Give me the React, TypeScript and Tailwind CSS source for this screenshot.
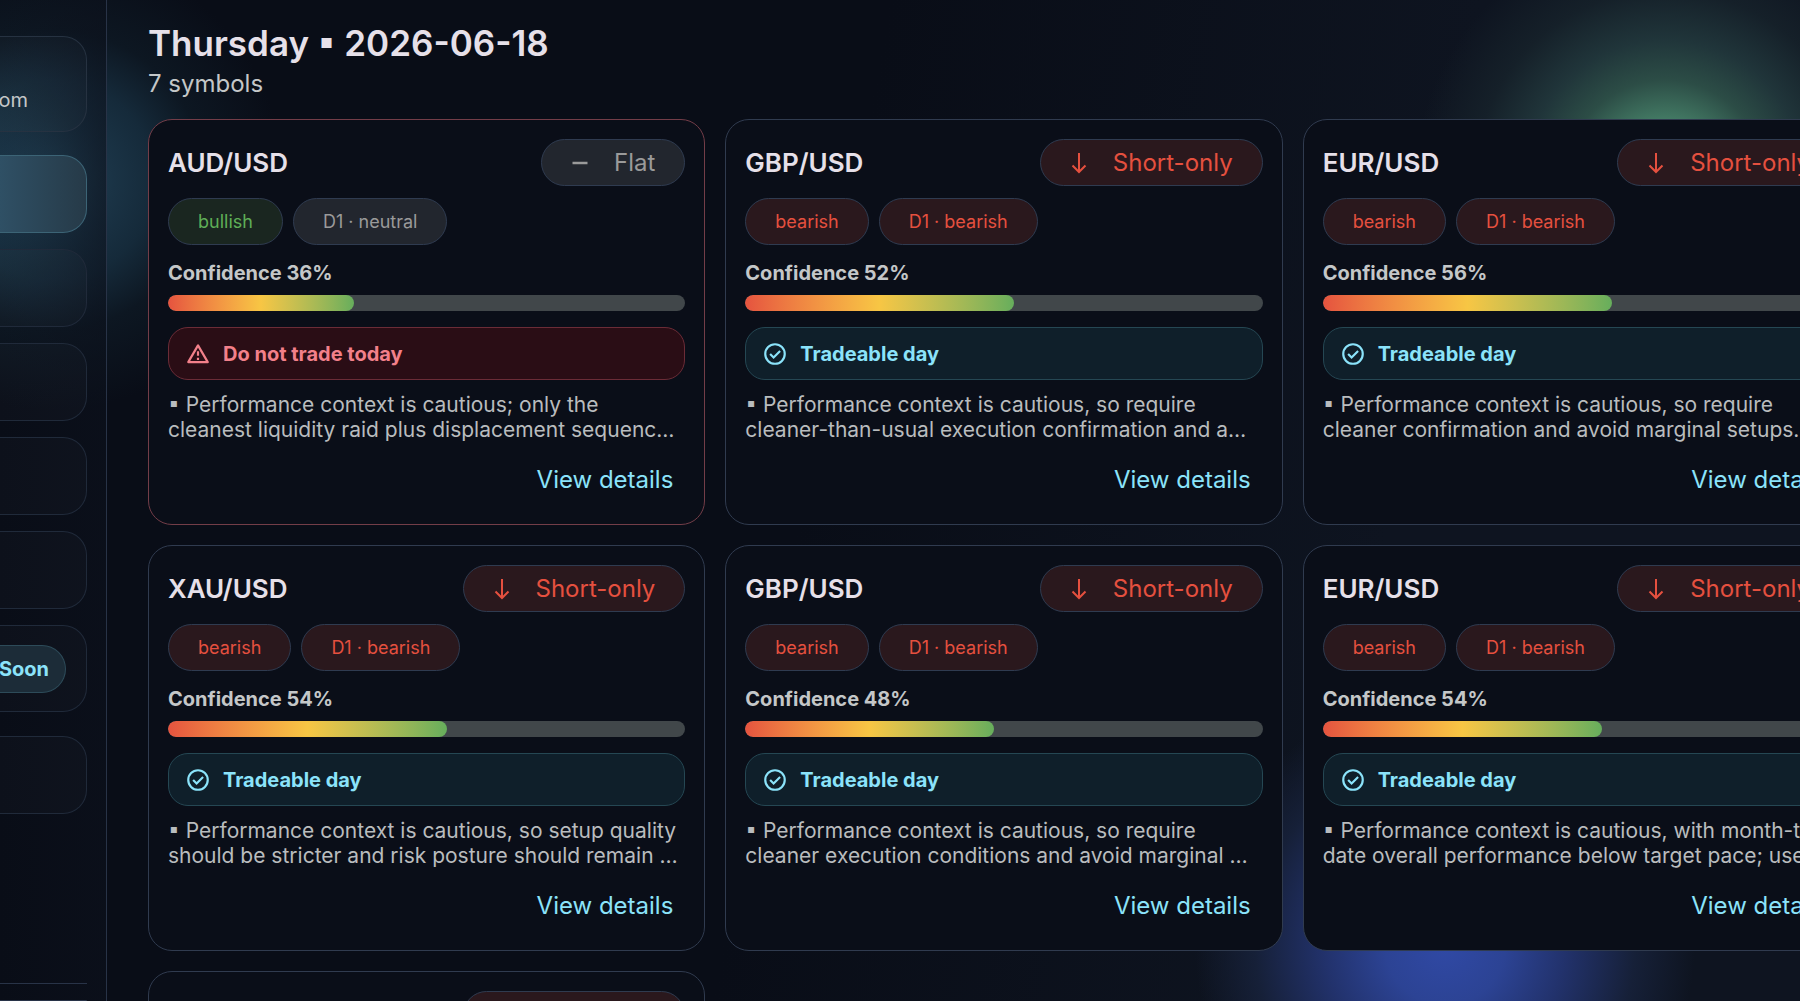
import type { ReactNode } from "react";
import clsx from "clsx";

type Tone = "bullish" | "bearish" | "neutral";

type SymbolPlan = {
  id: number;
  symbol: string;
  direction: "Flat" | "Short-only";
  bias: Tone;
  daily: Tone;
  confidence: number;
  tradeable: boolean;
  summary: ReactNode;
};

const plans: SymbolPlan[] = [
  {
    id: 1,
    symbol: "AUD/USD",
    direction: "Flat",
    bias: "bullish",
    daily: "neutral",
    confidence: 36,
    tradeable: false,
    summary: (
      <>
        ▪ Performance context is cautious; only the
        <br />
        cleanest liquidity raid plus displacement sequenc…
      </>
    ),
  },
  {
    id: 2,
    symbol: "GBP/USD",
    direction: "Short-only",
    bias: "bearish",
    daily: "bearish",
    confidence: 52,
    tradeable: true,
    summary: (
      <>
        ▪ Performance context is cautious, so require
        <br />
        cleaner-than-usual execution confirmation and a…
      </>
    ),
  },
  {
    id: 3,
    symbol: "EUR/USD",
    direction: "Short-only",
    bias: "bearish",
    daily: "bearish",
    confidence: 56,
    tradeable: true,
    summary: (
      <>
        ▪ Performance context is cautious, so require
        <br />
        cleaner confirmation and avoid marginal setups…
      </>
    ),
  },
  {
    id: 4,
    symbol: "XAU/USD",
    direction: "Short-only",
    bias: "bearish",
    daily: "bearish",
    confidence: 54,
    tradeable: true,
    summary: (
      <>
        ▪ Performance context is cautious, so setup quality
        <br />
        should be stricter and risk posture should remain …
      </>
    ),
  },
  {
    id: 5,
    symbol: "GBP/USD",
    direction: "Short-only",
    bias: "bearish",
    daily: "bearish",
    confidence: 48,
    tradeable: true,
    summary: (
      <>
        ▪ Performance context is cautious, so require
        <br />
        cleaner execution conditions and avoid marginal …
      </>
    ),
  },
  {
    id: 6,
    symbol: "EUR/USD",
    direction: "Short-only",
    bias: "bearish",
    daily: "bearish",
    confidence: 54,
    tradeable: true,
    summary: (
      <>
        ▪ Performance context is cautious, with month-to-
        <br />
        date overall performance below target pace; use…
      </>
    ),
  },
  {
    id: 7,
    symbol: "XAU/USD",
    direction: "Short-only",
    bias: "bearish",
    daily: "bearish",
    confidence: 50,
    tradeable: true,
    summary: <>▪ Performance context is cautious</>,
  },
];

const toneClass: Record<Tone, string> = {
  bullish: "bg-[#1a2620] text-[#5fae57]",
  bearish: "bg-[#2a181d] text-[#e5503f]",
  neutral: "bg-[#22262e] text-[#9a9a9a]",
};

function Chip({ tone, children }: { tone: Tone; children: ReactNode }) {
  return (
    <span
      className={clsx(
        "flex h-[47px] items-center rounded-full border border-[#2f3b50] px-[29px] text-lg",
        toneClass[tone]
      )}
    >
      {children}
    </span>
  );
}

function DirectionPill({ direction }: { direction: SymbolPlan["direction"] }) {
  const flat = direction === "Flat";
  return (
    <span
      className={clsx(
        "flex h-[47px] items-center gap-[22px] rounded-full border border-[#2f3b50] pl-[26px] pr-[29px] text-2xl",
        toneClass[flat ? "neutral" : "bearish"]
      )}
    >
      <svg
        viewBox="0 0 24 24"
        className="size-6"
        fill="none"
        stroke="currentColor"
        strokeWidth="2"
      >
        {flat ? (
          <path d="M4.500 12h15" strokeWidth="2.500" />
        ) : (
          <path d="M12 2v19M5.500 14.500l6.500 6.500 6.500-6.500" />
        )}
      </svg>
      {direction}
    </span>
  );
}

function DayStatus({ tradeable }: { tradeable: boolean }) {
  return (
    <div
      className={clsx(
        "mt-4 flex h-[53px] items-center gap-3 rounded-[20px] border px-4 text-xl font-bold",
        tradeable
          ? "border-[#254753] bg-[#0f1f2a] text-[#8be3fa]"
          : "border-[#6b2c37] bg-[#2a0d15] text-[#f2808a]"
      )}
    >
      <svg
        viewBox="0 0 24 24"
        className="size-[26px]"
        fill="none"
        stroke="currentColor"
        strokeWidth="2"
      >
        {tradeable ? (
          <>
            <circle cx="12" cy="12" r="9" />
            <path d="M7.500 12l3.200 3.200 6-6" />
          </>
        ) : (
          <>
            <path d="M12 4L3 19.500h18z" strokeLinejoin="round" />
            <path d="M12 9.500v4M12 15.500v2" />
          </>
        )}
      </svg>
      {tradeable ? "Tradeable day" : "Do not trade today"}
    </div>
  );
}

function PlanCard({ plan }: { plan: SymbolPlan }) {
  return (
    <article
      className={clsx(
        "h-[406px] rounded-3xl border bg-[#0a0e18] p-[19px]",
        plan.tradeable ? "border-[#303b4f]" : "border-[#733d48]"
      )}
    >
      <div className="flex items-center justify-between">
        <h2 className="text-[26px] leading-9 font-semibold text-[#e6e0e9]">
          {plan.symbol}
        </h2>
        <DirectionPill direction={plan.direction} />
      </div>
      <div className="mt-3 flex gap-[10px]">
        <Chip tone={plan.bias}>{plan.bias}</Chip>
        <Chip tone={plan.daily}>D1 · {plan.daily}</Chip>
      </div>
      <p className="mt-[14px] text-xl leading-7 font-bold text-[#c4c7c8]">
        Confidence {plan.confidence}%
      </p>
      <div className="mt-2 h-4 overflow-hidden rounded-full bg-[#41474a]">
        <div
          className="h-full rounded-full bg-linear-to-r from-[#e5533f] via-[#f7c644] to-[#66ae5c]"
          style={{ width: `${plan.confidence}%` }}
        />
      </div>
      <DayStatus tradeable={plan.tradeable} />
      <p className="mt-3 whitespace-nowrap text-[21px] leading-[25px] text-[#b9bcbe]">
        {plan.summary}
      </p>
      <div className="mt-[18px] flex justify-end">
        <button className="px-3 py-1 text-2xl text-[#8be3fa]">View details</button>
      </div>
    </article>
  );
}

function NavBox({ className, children }: { className?: string; children?: ReactNode }) {
  return (
    <div
      className={clsx(
        "flex shrink-0 items-center justify-end rounded-r-3xl border border-l-0",
        className
      )}
    >
      {children}
    </div>
  );
}

const idle = "h-[78px] border-[#202a3a] bg-white/2";

function Sidebar() {
  return (
    <aside className="flex w-[107px] shrink-0 flex-col gap-4 border-r border-[#283347] bg-linear-to-r from-[#1d3646]/0 to-[#0c111c]/60 pt-9 pr-[19px]">
      <NavBox className="mb-[7px] h-24 border-[#263241] bg-white/2 pr-[58px]">
        <span className="pt-8 text-xl text-[#c4c7c8]">om</span>
      </NavBox>
      <NavBox className="h-[78px] border-[#3c6476] bg-linear-to-r from-[#2f5065] to-[#263a48]" />
      <NavBox className={idle} />
      <NavBox className={idle} />
      <NavBox className={idle} />
      <NavBox className={idle} />
      <NavBox className="h-[87px] border-[#202a3a] bg-white/2 pr-5">
        <span className="flex h-12 items-center rounded-r-full border border-l-0 border-[#2d4b59] bg-[#1c2c38] pr-4 text-xl font-bold text-[#8be3fa]">
          Soon
        </span>
      </NavBox>
      <NavBox className="mt-2 h-[78px] border-[#202a3a] bg-white/2" />
      <hr className="mt-auto border-[#283347]" />
      <div className="h-px shrink-0 rounded-tr-full border-t border-[#283347]" />
    </aside>
  );
}

export default function App() {
  return (
    <div className="flex h-screen overflow-hidden bg-[#090d17] bg-[radial-gradient(circle_at_3%_180px,#234458_0,#1a3345_60px,#152a3a_100px,#0d1722_150px,#090d1700_230px),radial-gradient(circle_at_1665px_180px,#4d8c72_0,#437a64_60px,#2c4d46_100px,#20353a_140px,#152029_190px,#0f142000_250px),radial-gradient(circle_at_1445px_945px,#3049a5_0,#2c4394_60px,#22326c_120px,#162038_190px,#0f142000_250px),linear-gradient(100deg,#090d17_45%,#0e1420_75%)] font-['Inter',sans-serif]">
      <Sidebar />
      <main className="-mr-[60px] min-w-0 flex-1 pt-5 pl-[41px]">
        <h1 className="text-[35px] leading-[46px] font-semibold text-[#e6e0e9]">
          Thursday ▪ 2026-06-18
        </h1>
        <p className="mb-[17px] text-2xl leading-9 text-[#c4c7c8]">7 symbols</p>
        <section className="grid grid-cols-3 gap-5">
          {plans.map((plan) => (
            <PlanCard key={plan.id} plan={plan} />
          ))}
        </section>
      </main>
    </div>
  );
}
